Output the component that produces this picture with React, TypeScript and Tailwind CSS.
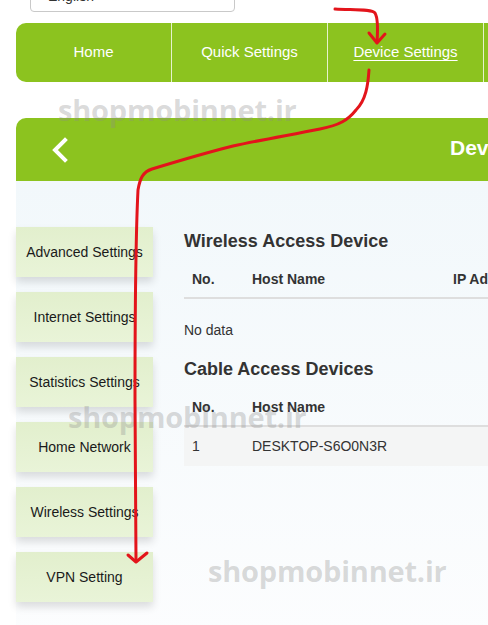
import React from "react";

const font = { fontFamily: '"Liberation Sans", Arial, sans-serif' };

function SideBtn({ label }: { label: string }) {
  return (
    <div className="flex h-[50px] w-[137px] items-center justify-center bg-gradient-to-b from-[#e2efcd] to-[#e9f4d8] text-[14px] text-[#1a1a1a] shadow-[0_5px_8px_rgba(0,0,0,0.13)]">
      {label}
    </div>
  );
}

function Watermark({ className }: { className: string }) {
  return (
    <div
      className={`pointer-events-none absolute text-[29px] font-bold leading-none tracking-[-0.2px] text-[rgba(140,140,140,0.33)] ${className}`}
      style={{ fontFamily: '"Open Sans", "Noto Sans", sans-serif' }}
    >
      shopmobinnet.ir
    </div>
  );
}

export default function App() {
  return (
    <div className="relative h-[625px] w-[488px] overflow-hidden bg-white" style={font}>
      {/* language select */}
      <div className="ml-[30px] mt-[-21px] flex h-[33px] w-[205px] items-end rounded-[4px] border border-[#c9c9c9] bg-white pb-[8px] pl-[17px] text-[14px] leading-none text-[#333]">
        English
      </div>

      {/* nav */}
      <div className="ml-[16px] mt-[11px] flex h-[59px] w-[600px] rounded-l-[10px] bg-[#8cc31f] text-[15px] text-white">
        <div className="flex w-[156px] shrink-0 items-center justify-center border-r border-[#e6f2cc]">Home</div>
        <div className="flex w-[156px] shrink-0 items-center justify-center border-r border-[#e6f2cc]">Quick Settings</div>
        <div className="flex w-[156px] shrink-0 items-center justify-center border-r border-[#e6f2cc] underline underline-offset-[3px]">Device Settings</div>
        <div className="flex w-[156px] shrink-0 items-center justify-center">Wireless</div>
      </div>

      {/* panel */}
      <div className="ml-[16px] mt-[36px] w-[700px]">
        <div className="flex h-[63px] items-center rounded-tl-[10px] bg-[#8cc31f]">
          <svg width="20" height="26" viewBox="0 0 20 26" className="ml-[34px]">
            <polyline points="15,3 5,13 15,23" fill="none" stroke="white" strokeWidth="4" strokeLinecap="square" />
          </svg>
          <div className="ml-[380px] mt-[-4px] text-[21px] font-bold text-white">Device Settings</div>
        </div>
        <div className="flex h-[460px] bg-gradient-to-b from-[#f2f8fb] to-[#fcfdfe]">
          <div className="flex w-[137px] flex-col gap-[15px] pt-[46px]">
            <SideBtn label="Advanced Settings" />
            <SideBtn label="Internet Settings" />
            <SideBtn label="Statistics Settings" />
            <SideBtn label="Home Network" />
            <SideBtn label="Wireless Settings" />
            <SideBtn label="VPN Setting" />
          </div>
          <div className="ml-[31px] flex-1 pt-[50px] text-[#333]">
            <div className="h-[20px] text-[18px] font-bold leading-[20px]">Wireless Access Device</div>
            <div className="mt-[11px] flex h-[37px] items-center border-b-2 border-[#dedede] text-[14px] font-bold">
              <div className="w-[68px] pl-[8px]">No.</div>
              <div className="w-[201px]">Host Name</div>
              <div>IP Address</div>
            </div>
            <div className="mt-[23px] h-[16px] text-[14px] leading-[16px]">No data</div>
            <div className="mt-[21px] h-[20px] text-[18px] font-bold leading-[20px]">Cable Access Devices</div>
            <div className="mt-[11px] flex h-[37px] items-center border-b-2 border-[#dedede] text-[14px] font-bold">
              <div className="w-[68px] pl-[8px]">No.</div>
              <div className="w-[201px]">Host Name</div>
            </div>
            <div className="flex h-[39px] items-center bg-[#f4f5f5] text-[14px]">
              <div className="w-[68px] pl-[8px]">1</div>
              <div className="w-[201px]">DESKTOP-S6O0N3R</div>
            </div>
          </div>
        </div>
      </div>

      <Watermark className="left-[58px] top-[95px]" />
      <Watermark className="left-[68px] top-[402px]" />
      <Watermark className="left-[208px] top-[556px]" />

      {/* red annotation arrows */}
      <svg className="pointer-events-none absolute left-0 top-0" width="488" height="625" viewBox="0 0 488 625">
        <path d="M335 9 C355 10 372 9 375 13 C378 18 378 28 377 42" fill="none" stroke="#e3141b" strokeWidth="3" strokeLinecap="round" />
        <path d="M369 33 L377 43 L385 34" fill="none" stroke="#e3141b" strokeWidth="3" strokeLinecap="round" strokeLinejoin="round" />
        <path d="M369 70 C368 85 366 100 356 110 C348 120 340 125 320 129 C290 135 260 140 233 146 C205 153 175 162 152 169 C143 172 140 178 138 190 C136 230 135 300 135 400 C135 480 136 530 136 561" fill="none" stroke="#e3141b" strokeWidth="3" strokeLinecap="round" />
        <path d="M128 555 L136 562 L147 553" fill="none" stroke="#e3141b" strokeWidth="3" strokeLinecap="round" strokeLinejoin="round" />
      </svg>
    </div>
  );
}
